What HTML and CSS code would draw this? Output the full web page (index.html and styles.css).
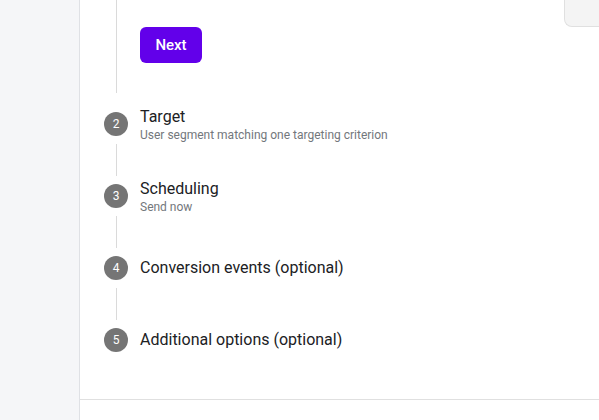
FILE: index.html
```html
<!DOCTYPE html>
<html>
<head>
<meta charset="utf-8">
<link rel="stylesheet" href="styles.css">
</head>
<body>
<div class="app">
  <aside class="sidebar"></aside>
  <main class="main">
    <div class="top">
      <div class="stepper">
        <div class="step-body first">
          <button class="btn-next">Next</button>
        </div>

        <div class="step">
          <div class="step-head">
            <span class="num">2</span>
            <div class="label two">
              <div class="title">Target</div>
              <div class="sub">User segment matching one targeting criterion</div>
            </div>
          </div>
          <div class="connector"></div>
        </div>

        <div class="step">
          <div class="step-head">
            <span class="num">3</span>
            <div class="label two">
              <div class="title">Scheduling</div>
              <div class="sub">Send now</div>
            </div>
          </div>
          <div class="connector"></div>
        </div>

        <div class="step">
          <div class="step-head">
            <span class="num">4</span>
            <div class="label one">
              <div class="title">Conversion events (optional)</div>
            </div>
          </div>
          <div class="connector"></div>
        </div>

        <div class="step">
          <div class="step-head">
            <span class="num">5</span>
            <div class="label one">
              <div class="title">Additional options (optional)</div>
            </div>
          </div>
        </div>
      </div>
      <div class="aside-right">
        <div class="preview-card"></div>
      </div>
    </div>
  </main>
</div>
</body>
</html>
```
FILE: styles.css
```css
* { box-sizing: border-box; }
html, body { margin: 0; padding: 0; height: 100%; }
body {
  font-family: Roboto, "Liberation Sans", Arial, sans-serif;
  background: #fff;
  color: #202124;
}
.app {
  display: flex;
  height: 420px;
  overflow: hidden;
}
.sidebar {
  width: 80px;
  flex: 0 0 80px;
  background: #f5f6f8;
  border-right: 1px solid #dfe1e5;
}
.main {
  flex: 1;
  display: flex;
  flex-direction: column;
  min-width: 0;
}
.top {
  display: flex;
  border-bottom: 1px solid #e0e0e0;
}
.stepper {
  flex: 1;
  padding: 0 0 47px 24px;
}
.step-body.first {
  margin-left: 12px;
  border-left: 1px solid #dadada;
  padding: 27px 0 30px 23px;
  margin-bottom: 19px;
}
.btn-next {
  display: block;
  height: 36px;
  width: 62px;
  border: none;
  border-radius: 6px;
  background: #6200ea;
  color: #fff;
  font-family: Roboto, "Liberation Sans", Arial, sans-serif;
  font-size: 15px;
  font-weight: 500;
  padding: 0;
}
.step-head {
  display: flex;
  align-items: flex-start;
  height: 24px;
  gap: 12px;
}
.num {
  flex: 0 0 24px;
  width: 24px;
  height: 24px;
  border-radius: 50%;
  background: #757575;
  color: #fff;
  font-size: 12px;
  line-height: 24px;
  text-align: center;
}
.label { white-space: nowrap; }
.label.two { margin-top: -5px; }
.label.one { margin-top: 2px; }
.title {
  font-size: 16px;
  line-height: 20px;
  color: #202124;
}
.sub {
  font-size: 12px;
  line-height: 16px;
  color: #73777c;
}
.connector {
  margin: 8px 0 8px 12px;
  height: 32px;
  border-left: 1px solid #dadada;
}
.aside-right {
  width: 35px;
  flex: 0 0 35px;
}
.preview-card {
  height: 27px;
  background: #f4f4f4;
  border: 1px solid #e0e0e0;
  border-top: none;
  border-right: none;
  border-bottom-left-radius: 8px;
}
```
